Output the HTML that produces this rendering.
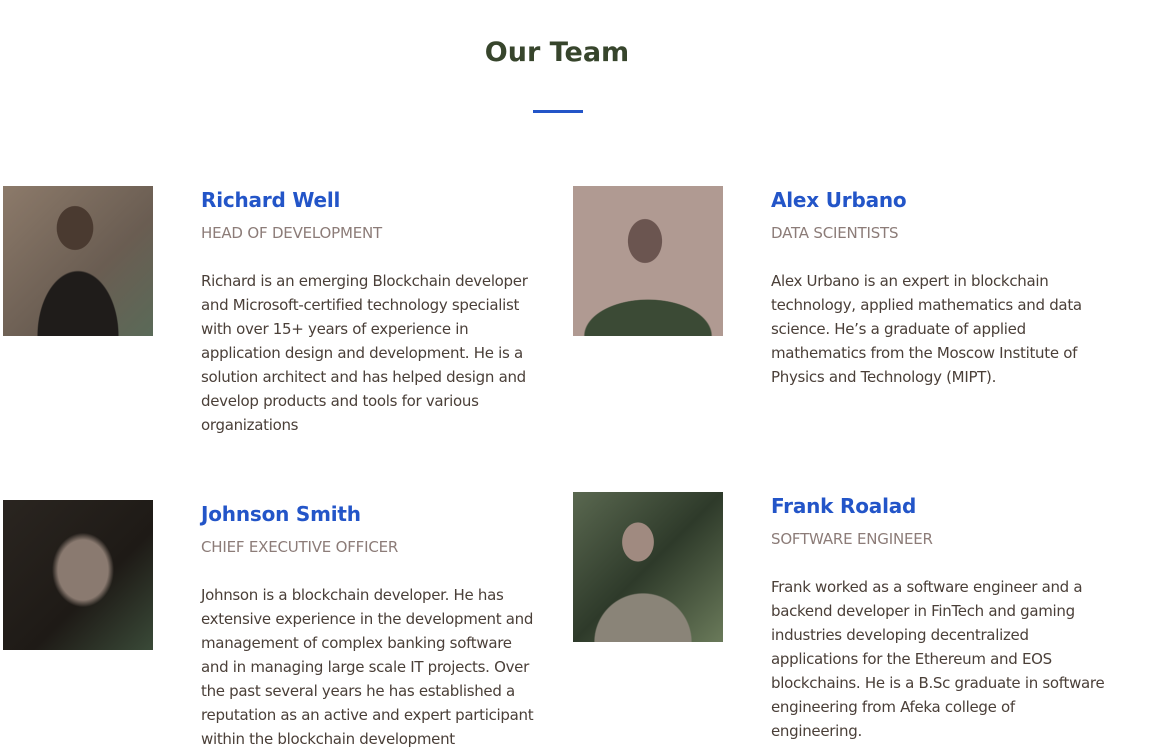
<!DOCTYPE html>
<html><head><meta charset="utf-8"><style>
body{margin:0;width:1152px;height:750px;overflow:hidden;background:#fff;font-family:"DejaVu Sans","Liberation Sans",sans-serif;position:relative}
h1{position:absolute;top:34px;left:0;width:1114px;text-align:center;margin:0;font-size:27px;color:#37452c;font-weight:bold;line-height:38px}
.bar{position:absolute;left:533px;top:110px;width:50px;height:3px;background:#2355c8}
.img{position:absolute;width:150px;height:150px}
.t{position:absolute;width:360px}
.n{font-size:20px;font-weight:bold;color:#2355c8;line-height:28px;white-space:nowrap;letter-spacing:-0.2px}
.r{font-size:15px;color:#8c7c78;margin-top:8px;line-height:22px;white-space:nowrap;letter-spacing:-0.2px}
.b{font-size:15px;color:#4a3f38;margin-top:25px;line-height:24px;white-space:nowrap;letter-spacing:-0.3px}
</style></head><body>
<h1>Our Team</h1><div class="bar"></div>

<div class="img" style="left:3px;top:186px;background:radial-gradient(ellipse 30px 36px at 72px 42px,#4a3a30 60%,transparent 62%),radial-gradient(ellipse 50px 80px at 75px 150px,#1f1c1a 80%,transparent 82%),linear-gradient(135deg,#8c7a6a,#6a5d52 60%,#5a6a58)"></div>
<div class="t" style="left:201px;top:186px"><div class="n">Richard Well</div><div class="r">HEAD OF DEVELOPMENT</div>
<div class="b">Richard is an emerging Blockchain developer<br>and Microsoft-certified technology specialist<br>with over 15+ years of experience in<br>application design and development. He is a<br>solution architect and has helped design and<br>develop products and tools for various<br>organizations</div></div>

<div class="img" style="left:573px;top:186px;background:radial-gradient(ellipse 28px 36px at 72px 55px,#6b5550 60%,transparent 62%),radial-gradient(ellipse 70px 40px at 75px 150px,#3b4a35 90%,transparent 92%),#b09a92"></div>
<div class="t" style="left:771px;top:186px"><div class="n">Alex Urbano</div><div class="r">DATA SCIENTISTS</div>
<div class="b">Alex Urbano is an expert in blockchain<br>technology, applied mathematics and data<br>science. He’s a graduate of applied<br>mathematics from the Moscow Institute of<br>Physics and Technology (MIPT).</div></div>

<div class="img" style="left:3px;top:500px;background:radial-gradient(ellipse 50px 60px at 80px 70px,#8a7a70 50%,transparent 62%),linear-gradient(135deg,#2a2520,#1e1a16 60%,#3a4a38)"></div>
<div class="t" style="left:201px;top:500px"><div class="n">Johnson Smith</div><div class="r">CHIEF EXECUTIVE OFFICER</div>
<div class="b">Johnson is a blockchain developer. He has<br>extensive experience in the development and<br>management of complex banking software<br>and in managing large scale IT projects. Over<br>the past several years he has established a<br>reputation as an active and expert participant<br>within the blockchain development</div></div>

<div class="img" style="left:573px;top:492px;background:radial-gradient(ellipse 26px 32px at 65px 50px,#a08a80 60%,transparent 62%),radial-gradient(ellipse 60px 60px at 70px 150px,#8a8478 80%,transparent 82%),linear-gradient(135deg,#5a6850,#2e3a2a 50%,#6a7a5a)"></div>
<div class="t" style="left:771px;top:492px"><div class="n">Frank Roalad</div><div class="r">SOFTWARE ENGINEER</div>
<div class="b">Frank worked as a software engineer and a<br>backend developer in FinTech and gaming<br>industries developing decentralized<br>applications for the Ethereum and EOS<br>blockchains. He is a B.Sc graduate in software<br>engineering from Afeka college of<br>engineering.</div></div>
</body></html>
